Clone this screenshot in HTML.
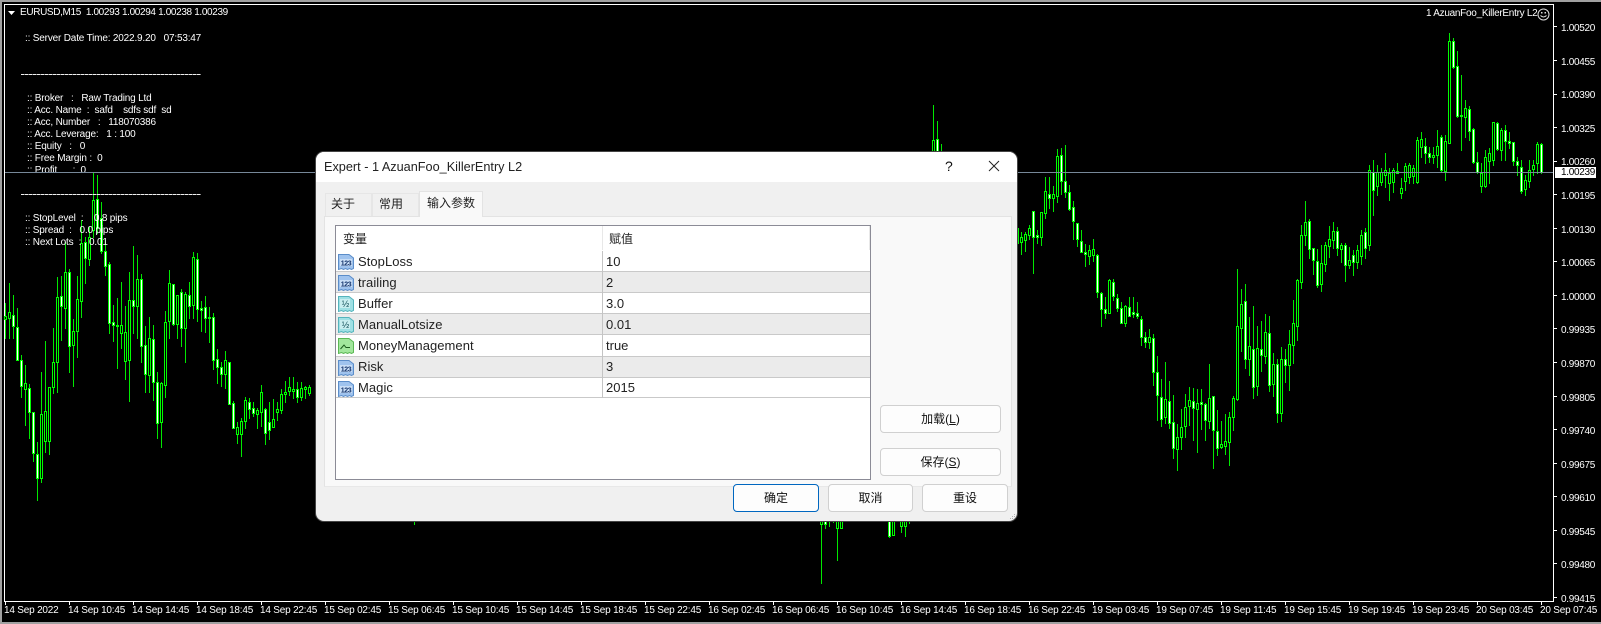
<!DOCTYPE html>
<html><head><meta charset="utf-8"><style>
html,body{margin:0;padding:0;background:#000}
#p{position:relative;width:1601px;height:624px;overflow:hidden;background:#000;font-family:"Liberation Sans","Noto Sans CJK SC",sans-serif}
#p div,#p span.a{position:absolute}
.t{color:#fff;font-size:10px;line-height:12px;height:12px;white-space:pre;letter-spacing:-.18px;margin-top:1px}
.y{color:#fff;font-size:10px;line-height:12px;left:1561px;letter-spacing:-.3px;white-space:pre;margin-top:2px}
.k{background:#fff;width:3px;height:1px;left:1554px}
.x{color:#fff;font-size:10px;line-height:12px;top:605px;white-space:pre;letter-spacing:-.2px}
.m{background:#fff;width:1px;height:3px;top:602px}
.d{color:#222;font-size:12px;line-height:16px;white-space:pre}
.r{left:336px;width:534px;border-bottom:1px solid #c9c9c9;background:#fff;box-sizing:border-box}
.r.g{background:#ebebeb}
.n{left:358px;font-size:13px;letter-spacing:.05px}.v{left:606px;font-size:13px}
.b{box-sizing:border-box;background:#fdfdfd;border:1px solid #d0d0d0;border-radius:4px;text-align:center;color:#111;font-size:12px;line-height:26px}
svg.i{position:absolute;left:338px;width:16px;height:16px}
</style></head><body><div id="p">
<div style="left:0;top:0;width:1601px;height:2px;background:#a0a0a0"></div>
<div style="left:0;top:0;width:2px;height:624px;background:#a0a0a0"></div>
<div style="left:0;top:622px;width:1601px;height:2px;background:#a0a0a0"></div>
<div style="left:4px;top:4px;width:1550px;height:1px;background:#fff"></div>
<div style="left:4px;top:4px;width:1px;height:598px;background:#fff"></div>
<div style="left:1553px;top:4px;width:1px;height:598px;background:#fff"></div>
<div style="left:4px;top:601px;width:1550px;height:1px;background:#fff"></div>

<svg id="c" width="1601" height="624" style="position:absolute;left:0;top:0" shape-rendering="crispEdges"></svg>
<div style="left:5px;top:172px;width:1548px;height:1px;background:#778899"></div>

<svg width="10" height="6" style="position:absolute;left:7px;top:10px"><path d="M1 1H8L4.5 5Z" fill="#fff"/></svg>
<div class="t" style="left:20px;top:6px;letter-spacing:-.35px">EURUSD,M15  1.00293 1.00294 1.00238 1.00239</div>
<div class="t" style="left:1426px;top:7px;letter-spacing:-.28px">1 AzuanFoo_KillerEntry L2</div>
<svg width="13" height="13" style="position:absolute;left:1537px;top:8px"><circle cx="6.5" cy="6.5" r="5.5" fill="none" stroke="#ddd"/><path d="M3.5 7.5Q6.5 10.5 9.5 7.5" fill="none" stroke="#ddd"/><path d="M4 4h1.5v1.5H4zM7.5 4H9v1.5H7.5z" fill="#ddd"/></svg>

<div class="t" style="left:25px;top:32px">:: Server Date Time: 2022.9.20   07:53:47</div>
<div style="left:21px;top:74px;width:180px;height:1px;background:repeating-linear-gradient(90deg,#eee 0 3px,#888 3px 4px)"></div>
<div class="t" style="left:27px;top:92px">:: Broker   :   Raw Trading Ltd</div>
<div class="t" style="left:27px;top:104px">:: Acc. Name  :  safd    sdfs sdf  sd</div>
<div class="t" style="left:27px;top:116px">:: Acc, Number   :   118070386</div>
<div class="t" style="left:27px;top:128px">:: Acc. Leverage:   1 : 100</div>
<div class="t" style="left:27px;top:140px">:: Equity   :   0</div>
<div class="t" style="left:27px;top:152px">:: Free Margin :  0</div>
<div class="t" style="left:27px;top:164px;height:7px;overflow:hidden">:: Profit      :  0</div>
<div style="left:21px;top:194px;width:180px;height:1px;background:repeating-linear-gradient(90deg,#eee 0 3px,#888 3px 4px)"></div>
<div class="t" style="left:25px;top:212px">:: StopLevel  :    0.8 pips</div>
<div class="t" style="left:25px;top:224px">:: Spread  :   0.0 pips</div>
<div class="t" style="left:25px;top:236px">:: Next Lots  :   0.01</div>

<div class="k" style="top:26px"></div><div class="y" style="top:21px">1.00520</div>
<div class="k" style="top:60px"></div><div class="y" style="top:55px">1.00455</div>
<div class="k" style="top:94px"></div><div class="y" style="top:88px">1.00390</div>
<div class="k" style="top:127px"></div><div class="y" style="top:122px">1.00325</div>
<div class="k" style="top:161px"></div><div class="y" style="top:155px">1.00260</div>
<div class="k" style="top:194px"></div><div class="y" style="top:189px">1.00195</div>
<div class="k" style="top:228px"></div><div class="y" style="top:223px">1.00130</div>
<div class="k" style="top:261px"></div><div class="y" style="top:256px">1.00065</div>
<div class="k" style="top:295px"></div><div class="y" style="top:290px">1.00000</div>
<div class="k" style="top:328px"></div><div class="y" style="top:323px">0.99935</div>
<div class="k" style="top:362px"></div><div class="y" style="top:357px">0.99870</div>
<div class="k" style="top:396px"></div><div class="y" style="top:391px">0.99805</div>
<div class="k" style="top:429px"></div><div class="y" style="top:424px">0.99740</div>
<div class="k" style="top:463px"></div><div class="y" style="top:458px">0.99675</div>
<div class="k" style="top:496px"></div><div class="y" style="top:491px">0.99610</div>
<div class="k" style="top:530px"></div><div class="y" style="top:525px">0.99545</div>
<div class="k" style="top:563px"></div><div class="y" style="top:558px">0.99480</div>
<div class="k" style="top:597px"></div><div class="y" style="top:592px">0.99415</div>
<div style="left:1555px;top:167px;width:41px;height:11px;background:#fff"></div>
<div class="y" style="top:167px;margin-top:0;color:#000">1.00239</div>

<div class="m" style="left:5px"></div><div class="x" style="left:4px">14 Sep 2022</div>
<div class="m" style="left:69px"></div><div class="x" style="left:68px">14 Sep 10:45</div>
<div class="m" style="left:133px"></div><div class="x" style="left:132px">14 Sep 14:45</div>
<div class="m" style="left:197px"></div><div class="x" style="left:196px">14 Sep 18:45</div>
<div class="m" style="left:261px"></div><div class="x" style="left:260px">14 Sep 22:45</div>
<div class="m" style="left:325px"></div><div class="x" style="left:324px">15 Sep 02:45</div>
<div class="m" style="left:389px"></div><div class="x" style="left:388px">15 Sep 06:45</div>
<div class="m" style="left:453px"></div><div class="x" style="left:452px">15 Sep 10:45</div>
<div class="m" style="left:517px"></div><div class="x" style="left:516px">15 Sep 14:45</div>
<div class="m" style="left:581px"></div><div class="x" style="left:580px">15 Sep 18:45</div>
<div class="m" style="left:645px"></div><div class="x" style="left:644px">15 Sep 22:45</div>
<div class="m" style="left:709px"></div><div class="x" style="left:708px">16 Sep 02:45</div>
<div class="m" style="left:773px"></div><div class="x" style="left:772px">16 Sep 06:45</div>
<div class="m" style="left:837px"></div><div class="x" style="left:836px">16 Sep 10:45</div>
<div class="m" style="left:901px"></div><div class="x" style="left:900px">16 Sep 14:45</div>
<div class="m" style="left:965px"></div><div class="x" style="left:964px">16 Sep 18:45</div>
<div class="m" style="left:1029px"></div><div class="x" style="left:1028px">16 Sep 22:45</div>
<div class="m" style="left:1093px"></div><div class="x" style="left:1092px">19 Sep 03:45</div>
<div class="m" style="left:1157px"></div><div class="x" style="left:1156px">19 Sep 07:45</div>
<div class="m" style="left:1221px"></div><div class="x" style="left:1220px">19 Sep 11:45</div>
<div class="m" style="left:1285px"></div><div class="x" style="left:1284px">19 Sep 15:45</div>
<div class="m" style="left:1349px"></div><div class="x" style="left:1348px">19 Sep 19:45</div>
<div class="m" style="left:1413px"></div><div class="x" style="left:1412px">19 Sep 23:45</div>
<div class="m" style="left:1477px"></div><div class="x" style="left:1476px">20 Sep 03:45</div>
<div class="m" style="left:1541px"></div><div class="x" style="left:1540px">20 Sep 07:45</div>

<!-- dialog -->
<div style="left:316px;top:152px;width:701px;height:369px;background:#f0f0f0;border-radius:8px;overflow:hidden;box-shadow:0 0 0 1px #444"></div>
<div style="left:316px;top:152px;width:701px;height:30px;background:#fff;border-radius:8px 8px 0 0"></div>
<div class="d" style="left:324px;top:159px;font-size:12.7px">Expert - 1 AzuanFoo_KillerEntry L2</div>
<div class="d" style="left:945px;top:158px;font-size:14px;color:#111">?</div>
<svg width="12" height="12" style="position:absolute;left:988px;top:160px"><path d="M1 1L11 11M11 1L1 11" stroke="#222" fill="none"/></svg>

<div style="left:324px;top:216px;width:688px;height:271px;box-sizing:border-box;background:#f9f9f9;border:1px solid #e3e3e3;border-bottom-color:#e8e8e8"></div>
<div style="left:325px;top:193px;width:47px;height:23px;box-sizing:border-box;background:#f0f0f0;border:1px solid #e6e6e6;border-bottom:0"></div>
<div style="left:372px;top:193px;width:47px;height:23px;box-sizing:border-box;background:#f0f0f0;border:1px solid #e6e6e6;border-bottom:0"></div>
<div style="left:419px;top:191px;width:64px;height:26px;box-sizing:border-box;background:#f9f9f9;border:1px solid #e3e3e3;border-bottom:0"></div>
<div class="d" style="left:331px;top:196px">关于</div>
<div class="d" style="left:379px;top:196px">常用</div>
<div class="d" style="left:427px;top:195px">输入参数</div>

<div style="left:335px;top:225px;width:536px;height:255px;box-sizing:border-box;background:#fff;border:1px solid #8b8b96"></div>
<div class="d" style="left:343px;top:231px">变量</div>
<div class="d" style="left:609px;top:231px">赋值</div>
<div style="left:602px;top:226px;width:1px;height:24px;background:#e8e8e8"></div>
<div style="left:869px;top:226px;width:1px;height:24px;background:#e8e8e8"></div>

<div class="r" style="top:251px;height:21px"></div>
<div class="r g" style="top:272px;height:21px"></div>
<div class="r" style="top:293px;height:21px"></div>
<div class="r g" style="top:314px;height:21px"></div>
<div class="r" style="top:335px;height:22px"></div>
<div class="r g" style="top:357px;height:21px"></div>
<div class="r" style="top:378px;height:20px"></div>
<div style="left:602px;top:251px;width:1px;height:147px;background:#c4c4c4"></div>

<svg width="0" height="0" style="position:absolute"><defs>
<path id="pg" d="M.5.5H11L15.5 4V14.5L13.5 15.5 11.5 14.5 9.5 15.5 7.5 14.5 5.5 15.5 3.5 14.5 .5 15.5Z"/>
</defs></svg>
<svg class="i" style="top:254px" viewBox="0 0 16 16"><use href="#pg" fill="#9fc3ee" stroke="#5b8dc9"/><rect x="2" y="5" width="12" height="7" fill="#c9def6"/><text x="8" y="11.3" text-anchor="middle" font-size="7" font-weight="bold" letter-spacing="-.4" font-family="Liberation Sans" fill="#14346c">123</text></svg>
<svg class="i" style="top:275px" viewBox="0 0 16 16"><use href="#pg" fill="#9fc3ee" stroke="#5b8dc9"/><rect x="2" y="5" width="12" height="7" fill="#c9def6"/><text x="8" y="11.3" text-anchor="middle" font-size="7" font-weight="bold" letter-spacing="-.4" font-family="Liberation Sans" fill="#14346c">123</text></svg>
<svg class="i" style="top:296px" viewBox="0 0 16 16"><use href="#pg" fill="#9fe0e4" stroke="#55b4bc"/><rect x="2" y="3" width="10" height="9" fill="#c8eef0"/><text x="7.5" y="11" text-anchor="middle" font-size="9" font-family="Liberation Sans" fill="#14505a">½</text></svg>
<svg class="i" style="top:317px" viewBox="0 0 16 16"><use href="#pg" fill="#9fe0e4" stroke="#55b4bc"/><rect x="2" y="3" width="10" height="9" fill="#c8eef0"/><text x="7.5" y="11" text-anchor="middle" font-size="9" font-family="Liberation Sans" fill="#14505a">½</text></svg>
<svg class="i" style="top:338px" viewBox="0 0 16 16"><use href="#pg" fill="#a2e79c" stroke="#5cb855"/><path d="M2.5 11L6 7 8 9.5H12" fill="none" stroke="#1c5c1c"/></svg>
<svg class="i" style="top:360px" viewBox="0 0 16 16"><use href="#pg" fill="#9fc3ee" stroke="#5b8dc9"/><rect x="2" y="5" width="12" height="7" fill="#c9def6"/><text x="8" y="11.3" text-anchor="middle" font-size="7" font-weight="bold" letter-spacing="-.4" font-family="Liberation Sans" fill="#14346c">123</text></svg>
<svg class="i" style="top:381px" viewBox="0 0 16 16"><use href="#pg" fill="#9fc3ee" stroke="#5b8dc9"/><rect x="2" y="5" width="12" height="7" fill="#c9def6"/><text x="8" y="11.3" text-anchor="middle" font-size="7" font-weight="bold" letter-spacing="-.4" font-family="Liberation Sans" fill="#14346c">123</text></svg>

<div class="d n" style="top:254px">StopLoss</div><div class="d v" style="top:254px">10</div>
<div class="d n" style="top:275px">trailing</div><div class="d v" style="top:275px">2</div>
<div class="d n" style="top:296px">Buffer</div><div class="d v" style="top:296px">3.0</div>
<div class="d n" style="top:317px">ManualLotsize</div><div class="d v" style="top:317px">0.01</div>
<div class="d n" style="top:338px">MoneyManagement</div><div class="d v" style="top:338px">true</div>
<div class="d n" style="top:359px">Risk</div><div class="d v" style="top:359px">3</div>
<div class="d n" style="top:380px">Magic</div><div class="d v" style="top:380px">2015</div>

<div class="b" style="left:880px;top:405px;width:121px;height:28px">加载(<u>L</u>)</div>
<div class="b" style="left:880px;top:448px;width:121px;height:28px">保存(<u>S</u>)</div>
<div class="b" style="left:733px;top:484px;width:86px;height:28px;border:1.5px solid #0067c0">确定</div>
<div class="b" style="left:828px;top:484px;width:85px;height:28px">取消</div>
<div class="b" style="left:922px;top:484px;width:86px;height:28px">重设</div>
<svg width="8" height="8" style="position:absolute;left:1009px;top:513px"><path d="M5 1h1v1H5zM3 3h1v1H3zM5 3h1v1H5zM1 5h1v1H1zM3 5h1v1H3zM5 5h1v1H5z" fill="#b0b0b0"/></svg>
</div>
<script>
var o='';
function C(x,wt,bt,bb,wb,f){
 o+='<rect x="'+x+'" y="'+wt+'" width="1" height="'+(wb-wt+1)+'" fill="#00e800"/>';
 var h=Math.max(bb-bt+1,2);
 o+='<rect x="'+(x-1)+'" y="'+bt+'" width="3" height="'+h+'" fill="#0f0"/>';
 if(h>2)o+='<rect x="'+x+'" y="'+(bt+1)+'" width="1" height="'+(h-2)+'" fill="'+(f?'#fff':'#000')+'"/>';
}
function S(oy,start,rows){
 rows.forEach(function(r,i){
  var R=function(v){return Math.round(oy+v/3)};
  C(5+4*(start+i),R(r[0]),R(r[1]),R(r[2]),R(r[3]),r[4]);
 });
}
S(165,0,[[415,452,462,520,0],[355,442,460,518,0],[390,450,482,520,1],[430,487,584,585,1],[570,586,662,695,1],[600,655,673,780,0],[658,670,742,820,1],[742,742,865,888,1],[830,868,938,1005,1],[622,748,940,950,0],[528,737,828,860,0],[665,667,827,868,0],[488,592,667,683,0],[335,397,590,680,0],[332,394,422,525,1],[230,322,428,490,0],[312,320,542,622,1],[462,498,540,662,0],[332,403,497,575,0],[165,235,407,455,0],[215,232,278,355,1],[185,215,282,300,0],[25,105,195,215,0],[30,103,190,205,1],[110,160,258,265,1],[225,258,302,330,1],[290,298,473,505,1],[420,472,480,527,1],[400,480,482,608,1],[350,480,503,548,0],[422,502,587,642,0],[322,405,585,708,0],[243,405,423,505,1],[270,343,423,520,0],[327,343,542,592,1],[482,540,628,680,1],[456,520,630,680,0],[480,522,650,705,1],[620,650,773,818,1],[650,655,770,845,0],[437,472,660,695,0],[315,355,467,520,0],[358,358,478,480,1],[392,390,478,520,0],[372,380,490,542,1],[380,388,488,592,0],[350,390,422,458,1],[262,277,420,458,0],[265,283,432,468,1],[408,430,434,497,1],[393,427,458,500,1],[427,457,460,530,1],[445,457,584,612,1],[552,583,605,655,1],[590,607,628,662,1],[558,586,628,670,0],[590,590,716,716,1],[708,715,788,790,1],[770,785,808,835,0],[758,768,808,872,0],[695,706,767,790,0],[698,712,733,760,1],[710,730,744,752,1],[730,736,748,790,0],[660,680,742,782,0],[730,733,805,836,1],[710,770,795,822,1],[703,763,785,785,0],[712,733,740,765,0],[672,688,735,745,0],[648,680,688,710,0],[635,667,678,690,0],[636,671,677,700,0],[650,673,697,712,1],[650,668,695,705,0],[662,667,673,700,0],[660,665,685,690,0]]);
// hidden behind dialog / peeking above and below
C(414,505,510,515,524,0);
C(933,105,140,200,200,0);C(937,121,139,200,200,1);C(941,144,160,200,200,0);
C(821,500,505,524,583,0);C(825,500,505,524,528,1);C(829,500,505,515,526,0);C(833,500,505,515,522,0);C(837,500,505,528,560,0);C(841,500,505,528,528,0);
C(889,500,505,536,537,1);C(893,500,505,535,535,0);C(897,500,505,518,520,0);C(901,500,505,526,532,0);C(905,500,505,526,536,0);C(909,500,505,518,523,0);
S(130,253,[[295,295,340,340,1],[305,322,335,372,0],[305,313,330,363,0],[285,295,315,327,0],[243,243,320,428,1],[300,316,320,338,1],[245,247,320,345,0],[140,184,248,264,0],[140,193,204,235,1],[168,193,204,243,0],[57,79,197,216,0],[53,76,152,192,1],[45,154,185,200,1],[165,187,237,240,1],[213,232,272,327,1],[280,280,326,348,1],[300,334,365,365,1],[342,366,372,408,1],[345,361,377,402,0]]);
S(180,272,[[178,208,224,243,0],[222,226,335,350,1],[335,340,388,437,1],[352,388,398,413,1],[298,300,400,400,0],[298,307,347,360,1],[343,355,383,392,1],[366,385,428,428,1],[375,378,428,438,0],[352,382,407,407,1],[352,396,402,410,1],[366,400,407,414,1],[408,418,470,495,1],[457,472,485,500,1],[447,472,487,503,0],[462,475,575,615,1],[528,577,644,720,1],[598,650,716,738,1],[546,658,712,730,0],[603,662,730,745,1],[645,727,803,833,1],[732,772,806,870,0],[687,742,770,806,0],[642,682,737,770,0],[622,660,677,735,0],[625,664,683,780,1],[627,670,686,815,0],[627,667,671,747,1],[668,672,719,780,1],[553,655,722,743,0],[648,649,749,863,1],[690,754,803,825,1],[723,793,800,805,0],[702,784,797,822,0],[697,712,785,855,0],[648,655,710,750,0],[267,438,656,660,0],[327,373,443,513,0],[312,364,536,565,1],[411,499,536,585,0],[378,508,620,653,1],[438,505,617,645,0],[423,508,524,573,1],[403,457,527,548,0],[408,460,614,632,1],[519,553,612,648,0],[537,553,700,725,1],[502,538,698,722,0],[507,538,555,605,1],[450,492,555,630,0],[360,430,494,548,0],[298,300,437,480,0],[135,166,305,323,0],[63,127,164,195,0],[118,124,208,233,1],[203,205,241,282,1],[208,244,314,320,1],[195,250,312,333,0],[186,196,251,273,0],[138,178,197,230,0],[127,154,179,205,0],[140,154,205,224,1],[190,196,208,245,0],[190,196,254,303,1],[200,241,254,265,0]]);
C(1353,250,255,262,275,1);C(1357,245,250,262,268,0);C(1361,230,235,256,264,0);C(1365,228,232,248,258,1);C(1369,165,170,245,250,0);C(1373,160,172,190,215,1);C(1377,165,172,186,195,0);
S(0,344,[[505,516,545,555,0],[458,510,525,560,0],[505,518,548,600,0],[505,510,547,575,0],[490,513,518,520,1],[533,565,580,595,0],[490,498,542,570,0],[490,495,530,550,0],[495,505,527,550,0],[410,420,547,550,0],[396,418,442,470,0],[415,438,460,490,1],[440,460,472,485,1],[440,466,472,490,0],[390,438,465,500,0],[405,410,510,512,1],[405,423,513,540,0],[100,122,428,430,0],[115,124,202,205,1],[152,197,347,352,1],[225,345,347,450,0],[300,325,350,410,0],[318,328,392,420,1],[385,388,485,490,1],[455,485,515,520,1],[490,518,557,575,0],[450,470,558,560,0],[445,460,482,550,0],[365,367,479,495,0],[365,368,446,450,1],[385,390,450,480,0],[375,390,424,480,1],[395,422,430,445,1],[425,427,482,495,1],[470,484,494,525,1],[480,500,572,580,1],[525,540,568,585,0],[480,510,544,560,0],[480,496,506,525,0],[425,431,490,520,0],[430,433,516,518,1]]);
document.getElementById('c').innerHTML=o;
</script>
</body></html>
